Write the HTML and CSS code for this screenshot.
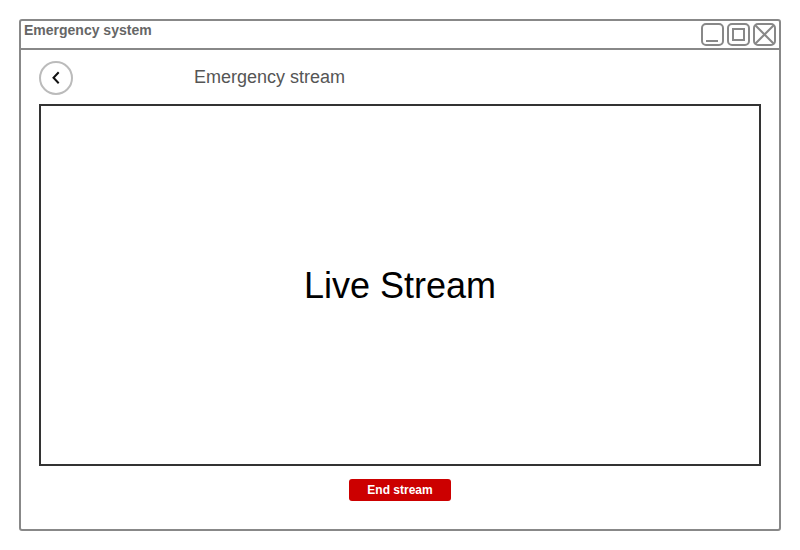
FILE: index.html
```html
<!DOCTYPE html>
<html lang="en">
<head>
<meta charset="utf-8">
<meta name="viewport" content="width=device-width, initial-scale=1">
<title>Emergency system</title>
<link rel="stylesheet" href="styles.css">
</head>
<body>
<div class="window">
  <header class="titlebar">
    <h1 class="titlebar-name">Emergency system</h1>
    <div class="controls">
      <button class="control" type="button" aria-label="Minimize">
        <svg width="23" height="23" viewBox="0 0 23 23"><rect x="1" y="1" width="21" height="21" rx="4"/><path d="M5 18H17"/></svg>
      </button>
      <button class="control" type="button" aria-label="Maximize">
        <svg width="23" height="23" viewBox="0 0 23 23"><rect x="1" y="1" width="21" height="21" rx="4"/><rect x="6" y="6" width="11" height="11"/></svg>
      </button>
      <button class="control" type="button" aria-label="Close">
        <svg width="23" height="23" viewBox="0 0 23 23"><rect x="1" y="1" width="21" height="21" rx="4"/><path d="M2 2L21 21M21 2L2 21"/></svg>
      </button>
    </div>
  </header>
  <main class="content">
    <div class="heading">
      <button class="back" type="button" aria-label="Back">
        <svg width="12" height="16" viewBox="0 0 12 16"><path d="M8.7 2.3L3.5 7.8L8.7 13.3"/></svg>
      </button>
      <h2 class="heading-name">Emergency stream</h2>
    </div>
    <section class="stream">Live Stream</section>
    <button class="end" type="button">End stream</button>
  </main>
</div>
</body>
</html>
```
FILE: styles.css
```css
* {
  box-sizing: border-box;
}

body {
  margin: 0;
  padding: 19px;
  min-height: 100vh;
  display: flex;
  background: #fff;
  font-family: "Liberation Sans", Arial, sans-serif;
}

h1,
h2 {
  margin: 0;
}

button {
  margin: 0;
  padding: 0;
  border: 0;
  background: none;
  font-family: inherit;
  cursor: pointer;
}

svg {
  display: block;
  fill: none;
  stroke-width: 2;
}

.window {
  flex: 1;
  display: flex;
  flex-direction: column;
  border: 2px solid #888;
  border-radius: 3px;
}

.titlebar {
  display: flex;
  justify-content: space-between;
  padding: 2px 3px;
  border-bottom: 2px solid #888;
}

.titlebar-name {
  font-size: 14px;
  line-height: 14px;
  color: #666;
}

.controls {
  display: flex;
  gap: 3px;
}

.control svg {
  stroke: #888;
}

.content {
  flex: 1;
  display: flex;
  flex-direction: column;
  padding: 11px 18px 28px;
}

.heading {
  display: flex;
  align-items: center;
  gap: 121px;
  margin-bottom: 9px;
}

.back {
  display: flex;
  align-items: center;
  justify-content: center;
  width: 34px;
  height: 34px;
  border: 2px solid #bbb;
  border-radius: 50%;
}

.back svg {
  stroke: #111;
}

.heading-name {
  padding-bottom: 2px;
  font-size: 18px;
  line-height: 20px;
  font-weight: 400;
  color: #555;
}

.stream {
  flex: 1;
  display: flex;
  align-items: center;
  justify-content: center;
  padding-top: 2px;
  border: 2px solid #333;
  font-size: 36px;
  line-height: 40px;
  color: #000;
}

.end {
  align-self: center;
  margin-top: 13px;
  padding: 0 18px;
  border-radius: 3px;
  background: #c00;
  color: #fff;
  font-size: 12px;
  font-weight: 700;
  line-height: 22px;
}
```
